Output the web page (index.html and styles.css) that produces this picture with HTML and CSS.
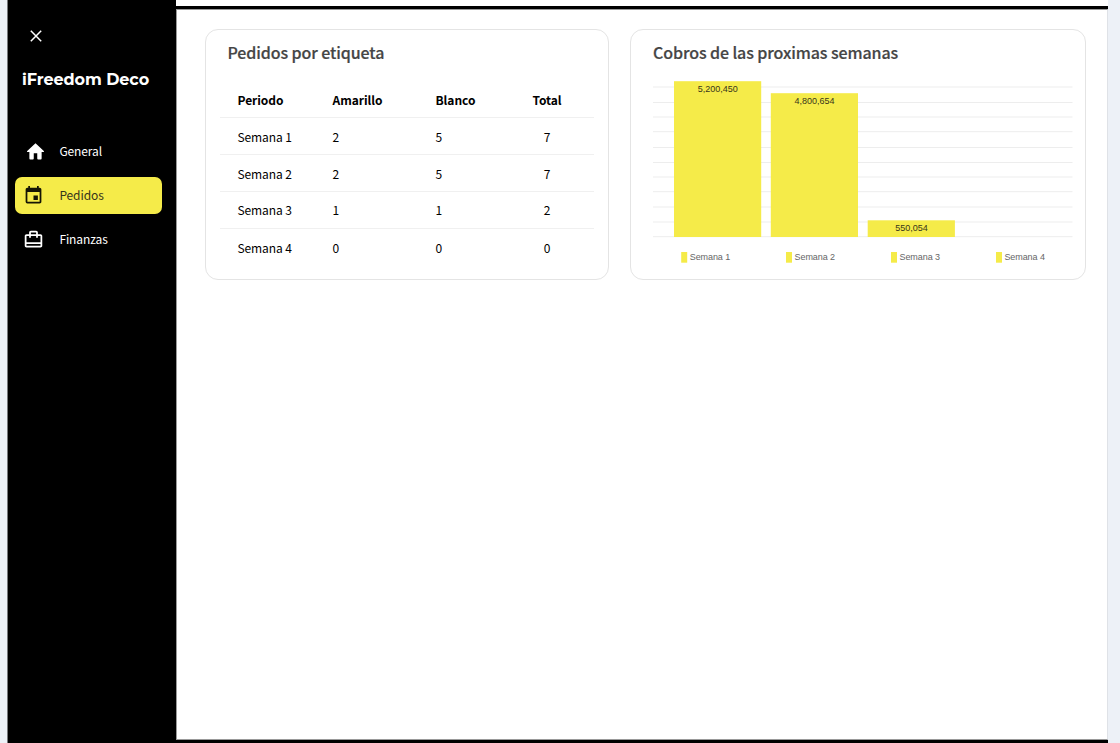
FILE: index.html
```html
<!DOCTYPE html>
<html lang="es">
<head>
<meta charset="utf-8">
<title>iFreedom Deco</title>
<link rel="stylesheet" href="styles.css">
</head>
<body>
<div class="app">
  <aside class="sidebar">
    <svg class="close" viewBox="0 0 12 12"><path d="M.8.8l10.4 10.4M11.2.8L.8 11.2"/></svg>
    <h1 class="brand">iFreedom Deco</h1>
    <nav class="nav">
      <a class="item"><svg class="icon home" viewBox="0 0 24 24"><path d="M12 2.600L2.500 11.500a.7.7 0 0 0 .5 1.200H5V20a1 1 0 0 0 1 1h3a1 1 0 0 0 1-1v-6h4v6a1 1 0 0 0 1 1h3a1 1 0 0 0 1-1v-7.300h2a.7.7 0 0 0 .5-1.200z"/></svg><span>General</span></a>
      <a class="item active"><svg class="icon" viewBox="0 0 24 24"><path d="M17 12h-5v5h5v-5zM16 1v2H8V1H6v2H5c-1.110 0-1.990.9-1.990 2L3 19a2 2 0 0 0 2 2h14c1.100 0 2-.9 2-2V5c0-1.100-.9-2-2-2h-1V1h-2zm3 18H5V8h14v11z"/></svg><span>Pedidos</span></a>
      <a class="item"><svg class="icon" viewBox="0 0 24 24"><path fill-rule="evenodd" d="M17 6V4c0-1.100-.9-2-2-2H9c-1.100 0-2 .9-2 2v2H4c-1.100 0-2 .9-2 2v11c0 1.100.9 2 2 2h16c1.100 0 2-.9 2-2V8c0-1.100-.9-2-2-2h-3zM9 4h6v2H9V4zm11 15H4v-2h16v2zm0-4H4V8h3v2h2V8h6v2h2V8h3v7z"/></svg><span>Finanzas</span></a>
    </nav>
  </aside>
  <main class="main">
    <section class="card orders">
      <h2 class="title">Pedidos por etiqueta</h2>
      <div class="table">
        <div class="row head"><span>Periodo</span><span>Amarillo</span><span>Blanco</span><span class="total">Total</span></div>
        <div class="row"><span>Semana 1</span><span>2</span><span>5</span><span class="total">7</span></div>
        <div class="row"><span>Semana 2</span><span>2</span><span>5</span><span class="total">7</span></div>
        <div class="row level"><span>Semana 3</span><span>1</span><span>1</span><span class="total">2</span></div>
        <div class="row level"><span>Semana 4</span><span>0</span><span>0</span><span class="total">0</span></div>
      </div>
    </section>
    <section class="card payments">
      <h2 class="title">Cobros de las proximas semanas</h2>
      <svg class="chart" width="420" height="190" viewBox="0 0 420 190">
        <path class="lines" d="M0 12H419.500M0 27.500H419.500M0 42H419.500M0 56.700H419.500M0 72.500H419.500M0 87.500H419.500M0 102H419.500M0 116.700H419.500M0 132H419.500M0 147H419.500M0 161.700H419.500"/>
        <g class="bars">
          <rect x="21" y="6.200" width="87.200" height="155.800"/>
          <rect x="117.800" y="18.200" width="87.200" height="143.800"/>
          <rect x="214.700" y="145.300" width="87.200" height="16.700"/>
        </g>
        <g class="values">
          <text x="64.700" y="17">5,200,450</text>
          <text x="161.500" y="29">4,800,654</text>
          <text x="258.400" y="156">550,054</text>
        </g>
        <g class="bars">
          <rect x="28.200" y="177" width="6" height="10.700"/>
          <rect x="133" y="177" width="6" height="10.700"/>
          <rect x="238" y="177" width="6" height="10.700"/>
          <rect x="343" y="177" width="6" height="10.700"/>
        </g>
        <g class="legend">
          <text x="36.700" y="185" textLength="40.500">Semana 1</text>
          <text x="141.600" y="185" textLength="40.500">Semana 2</text>
          <text x="246.500" y="185" textLength="40.500">Semana 3</text>
          <text x="351.400" y="185" textLength="40.500">Semana 4</text>
        </g>
      </svg>
    </section>
  </main>
</div>
</body>
</html>
```
FILE: styles.css
```css
* { box-sizing: border-box; }
body {
  margin: 0;
  height: 743px;
  padding: 0 12px 0 7px;
  overflow: hidden;
  background: #edf1f7;
  font-family: "Noto Sans CJK SC", "Noto Sans CJK JP", sans-serif;
  font-size: 12px;
  letter-spacing: -0.1px;
  color: #000;
}
.app {
  display: flex;
  height: 743px;
  background: linear-gradient(#fff 6px, #000 6px, #000 9px, transparent 9px);
}
.sidebar {
  width: 169px;
  flex: none;
  padding: 30px 14px 0 7px;
  background: #000;
  border-left: 1px solid #77797c;
}
.close {
  display: block;
  width: 12px;
  height: 12px;
  margin-left: 15px;
  fill: none;
  stroke: #fff;
  stroke-width: 1.5;
}
.brand {
  margin: 26px 0 0 7px;
  font: 700 16px/24px Montserrat, Inter, sans-serif;
  letter-spacing: -0.06px;
  color: #fff;
  white-space: nowrap;
}
.nav {
  display: grid;
  gap: 7px;
  margin-top: 41px;
}
.item {
  display: flex;
  align-items: center;
  gap: 15px;
  height: 37px;
  padding: 0 0 1px 8px;
  border-radius: 7px;
  color: #fff;
  line-height: 20px;
}
.item.active { background: #f5eb49; color: #37351b; }
.icon { width: 21px; height: 21px; fill: #fff; }
.item span { margin-left: 0.4px; }
.home { margin-left: 1.5px; margin-right: -1.5px; }
.active .icon { fill: #151505; margin-top: 1px; }
.main {
  flex: 1;
  display: flex;
  align-items: flex-start;
  gap: 21px;
  margin: 9px 0 3px;
  padding: 19px 0 0 28px;
  background: #fff;
  border: 1px solid #999;
  border-right-color: #dfe2e7;
  box-shadow: 0 3px #000, 0 -3px #000;
}
.card {
  height: 251px;
  border: 1px solid #e4e4e4;
  border-radius: 13px;
  background: #fff;
}
.orders { width: 404px; }
.payments { width: 456px; }
.title {
  margin: 9px 0 0 22px;
  font-size: 16px;
  font-weight: 500;
  line-height: 26px;
  letter-spacing: -0.1px;
  color: #454545;
  -webkit-text-stroke: 0.2px #454545;
  white-space: nowrap;
}
.orders .title { margin-left: 21.5px; }
.table { margin: 16px 14px 0; }
.row {
  display: grid;
  grid-template-columns: 95px 103px 64px 95px;
  align-items: center;
  height: 37px;
  padding: 2px 0 0 17.5px;
  border-bottom: 1px solid #f0f0f0;
  line-height: 20px;
}
.level { padding-top: 0; }
.row:last-child { border-bottom: 0; }
.head { font-weight: 700; letter-spacing: -0.05px; }
.total { text-align: center; }
.chart {
  display: block;
  margin: 10px 0 0 22px;
  font-family: "Liberation Sans", Arial, sans-serif;
  font-size: 9px;
  letter-spacing: 0;
}
.lines { stroke: #ededed; }
.bars { fill: #f5eb49; }
.values { fill: #37351b; text-anchor: middle; }
.legend { fill: #666; }
```
